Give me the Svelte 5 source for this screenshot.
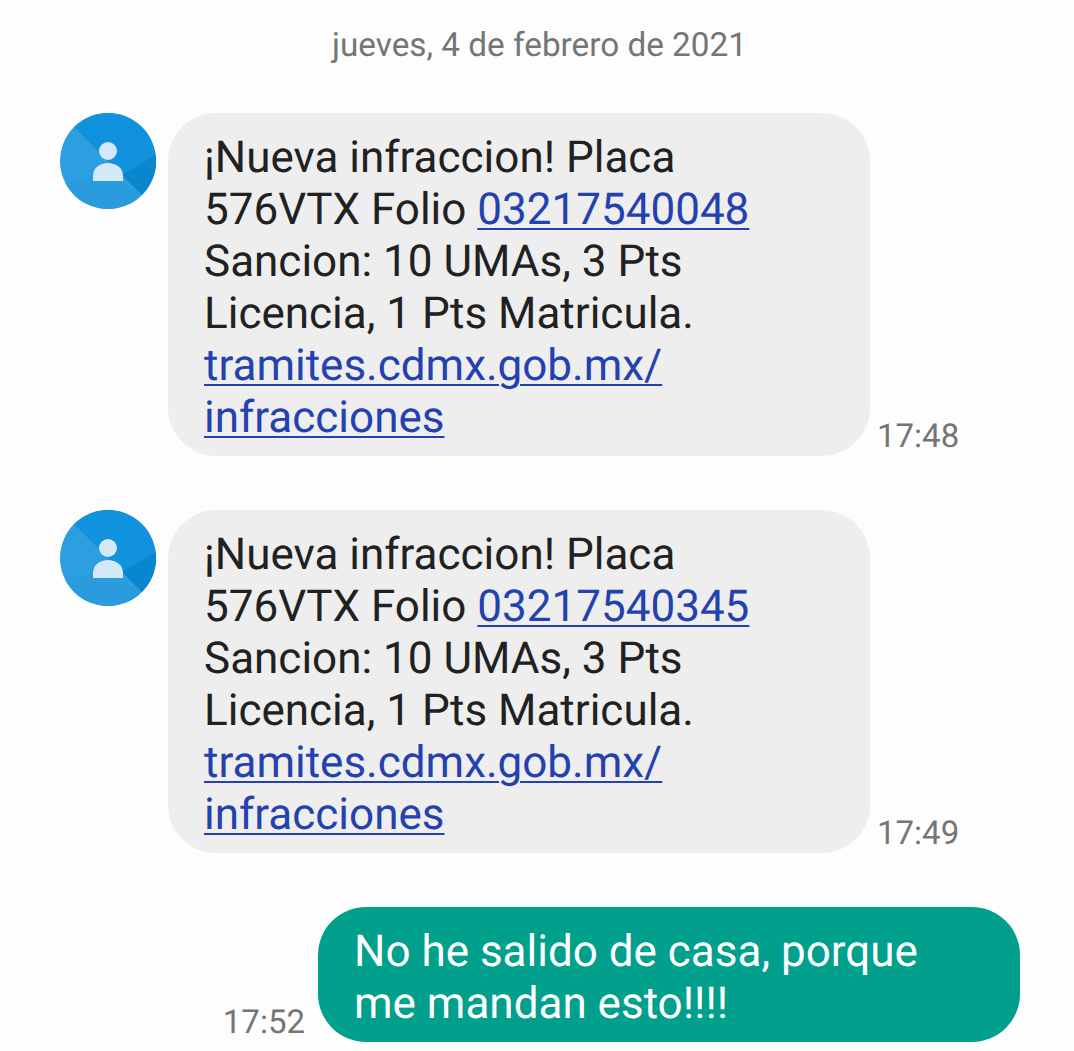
<script>
	const incoming = [
		{ folio: '03217540048', time: '17:48' },
		{ folio: '03217540345', time: '17:49' }
	];
</script>

<div class="thread">
	<div class="date">jueves, 4 de febrero de 2021</div>

	{#each incoming as msg}
		<div class="row">
			<svg class="avatar" viewBox="0 0 96 96" aria-hidden="true">
				<defs>
					<clipPath id="disc"><circle cx="48" cy="48" r="48" /></clipPath>
				</defs>
				<g clip-path="url(#disc)">
					<rect width="96" height="96" fill="#2b9fe0" />
					<path d="M14 14 L96 96 V0 H14 Z" fill="#1092dc" />
					<path d="M62 62 L96 42 V96 Z" fill="#0a86cf" />
					<path d="M0 96 V70 L48 62 L80 80 V96 Z" fill="#2a9bdc" />
				</g>
				<circle cx="48" cy="38" r="9" fill="#d3e9f7" />
				<path d="M33 68 V63 C33 55 40 50 48 50 C56 50 63 55 63 63 V68 Z" fill="#d3e9f7" />
			</svg>
			<div class="bubble in">
				¡Nueva infraccion! Placa<br />
				576VTX Folio <span class="link">{msg.folio}</span><br />
				Sancion: 10 UMAs, 3 Pts<br />
				Licencia, 1 Pts Matricula.<br />
				<span class="link">tramites.cdmx.gob.mx/</span><br />
				<span class="link">infracciones</span>
			</div>
			<div class="time">{msg.time}</div>
		</div>
	{/each}

	<div class="row out">
		<div class="time">17:52</div>
		<div class="bubble sent">
			No he salido de casa, porque<br />
			me mandan esto!!!!
		</div>
	</div>
</div>

<style>
	:global(body) {
		margin: 0;
		background: #fdfdfd;
	}

	.thread {
		display: flex;
		flex-direction: column;
		height: 1051px;
		overflow: hidden;
		box-sizing: border-box;
		padding: 0 54px 9px 60px;
		font-family: Roboto, sans-serif;
		text-rendering: geometricPrecision;
	}

	.date {
		height: 90px;
		margin: 0 1px 23px 0;
		line-height: 92px;
		text-align: center;
		font-size: 33.3px;
		color: #757575;
	}

	.row {
		display: flex;
		align-items: flex-end;
		margin-bottom: 54px;
	}

	.row.out {
		justify-content: flex-end;
		margin-bottom: 0;
	}

	.avatar {
		flex: none;
		align-self: flex-start;
		width: 96px;
		height: 96px;
		margin-right: 12px;
	}

	.bubble {
		box-sizing: border-box;
		width: 702px;
		border-radius: 48px;
		font-size: 44px;
		line-height: 52px;
		padding: 18px 20px 13px 36px;
	}

	.in {
		background: #eeeeee;
		color: #212121;
	}

	.sent {
		background: #00a08c;
		color: #ffffff;
	}

	.link {
		color: #2441b0;
		text-decoration: underline;
		text-decoration-thickness: 2px;
		text-underline-offset: 4px;
	}

	.time {
		font-size: 33px;
		line-height: 38px;
		color: #757575;
		margin-left: 7px;
	}

	.out .time {
		margin: 0 13px 0 0;
	}
</style>
